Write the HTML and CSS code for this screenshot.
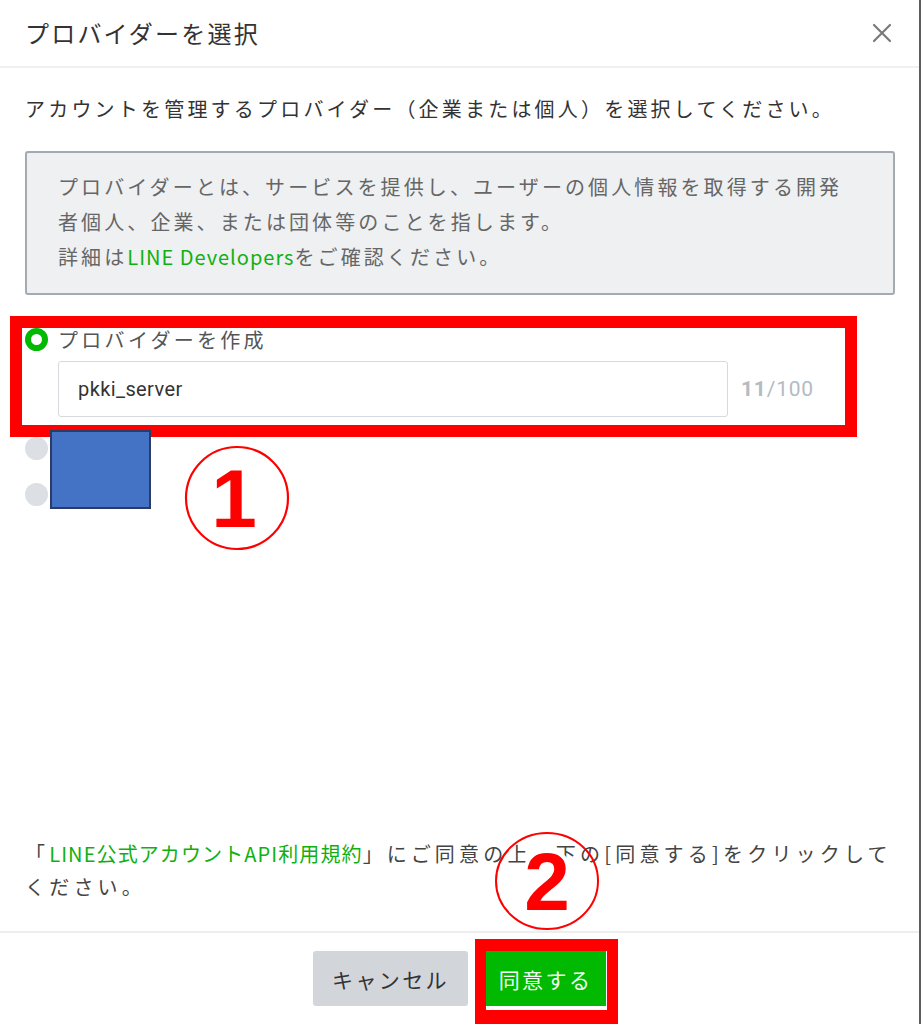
FILE: index.html
```html
<!DOCTYPE html>
<html lang="ja">
<head>
<meta charset="utf-8">
<title>プロバイダーを選択</title>
<link rel="stylesheet" href="styles.css">
</head>
<body>
<div class="modal">
  <header class="modal-header">
    <h1 class="modal-title">プロバイダーを選択</h1>
    <svg class="close" width="20" height="20" viewBox="0 0 20 20" aria-label="閉じる">
      <path d="M2 2 L18 18 M18 2 L2 18" stroke="#7a7a7a" stroke-width="2.2" fill="none" stroke-linecap="round"/>
    </svg>
  </header>

  <main class="modal-body">
    <p class="desc">アカウントを管理するプロバイダー（企業または個人）を選択してください。</p>
    <div class="info">
      プロバイダーとは、サービスを提供し、ユーザーの個人情報を取得する開発<br>者個人、企業、または団体等のことを指します。<br>詳細は<span class="link">LINE Developers</span>をご確認ください。
    </div>

    <div class="options">
      <div class="opt">
        <span class="radio radio-on"></span>
        <span class="opt-label">プロバイダーを作成</span>
      </div>
      <div class="input-row">
        <div class="text-input">pkki_server</div>
        <span class="counter"><b>11</b>/100</span>
      </div>
      <div class="opt opt-gap">
        <span class="radio"></span>
      </div>
      <div class="opt opt-gap">
        <span class="radio"></span>
      </div>
    </div>
  </main>

  <p class="terms">「<span class="link">LINE公式アカウントAPI利用規約</span>」にご同意の上、下の[同意する]をクリックして<br>ください。</p>

  <footer class="modal-footer">
    <button class="btn btn-cancel">キャンセル</button>
    <button class="btn btn-ok">同意する</button>
  </footer>

  <!-- annotations -->
  <div class="mark-box mark-box-1"></div>
  <div class="mark-blue"></div>
  <svg class="mark-num mark-num-1" width="110" height="110" viewBox="0 0 110 110">
    <circle cx="55" cy="55" r="51" fill="none" stroke="#ff0000" stroke-width="2.2"/>
    <text x="52" y="84" text-anchor="middle" class="num">1</text>
  </svg>
  <svg class="mark-num mark-num-2" width="110" height="104" viewBox="0 0 110 104">
    <ellipse cx="55" cy="52" rx="51" ry="48" fill="none" stroke="#ff0000" stroke-width="2"/>
    <text x="55" y="81" text-anchor="middle" class="num num-halo">2</text>
  </svg>
  <div class="mark-box mark-box-2"></div>
</div>
</body>
</html>
```

FILE: styles.css
```css
html, body {
  margin: 0;
  padding: 0;
  background: #ffffff;
}

.modal {
  position: relative;
  width: 921px;
  height: 1024px;
  box-sizing: border-box;
  border-right: 2px solid #5c5c5c;
  display: flex;
  flex-direction: column;
  background: #ffffff;
  font-family: "Noto Sans CJK JP", "Noto Sans", sans-serif;
  color: #333333;
  overflow: hidden;
}

.modal-header {
  height: 66px;
  flex: 0 0 auto;
  border-bottom: 2px solid #f0f0f0;
  display: flex;
  align-items: center;
  justify-content: space-between;
  padding: 0 27px 0 25px;
}

.modal-title {
  margin: 0;
  font-size: 24px;
  font-weight: 400;
  letter-spacing: 2.2px;
  color: #333333;
  line-height: 1;
}

.close {
  display: block;
}

.modal-body {
  padding: 24px 24px 0 25px;
}

.desc {
  margin: 0;
  font-size: 20px;
  line-height: 33px;
  letter-spacing: 3.2px;
  color: #333333;
  white-space: nowrap;
}

.info {
  margin-top: 26px;
  border: 2px solid #a4aab2;
  border-radius: 3px;
  background: #eef0f2;
  padding: 16px 10px 19px 31px;
  font-size: 20px;
  line-height: 35px;
  letter-spacing: 3.1px;
  color: #666666;
  white-space: nowrap;
}

.link {
  color: #10b010;
  letter-spacing: 1px;
}

.options {
  margin-top: 29px;
}

.opt {
  height: 30px;
  display: flex;
  align-items: center;
  gap: 10px;
}

.opt-gap {
  margin-top: 16px;
}

.radio {
  width: 23px;
  height: 23px;
  border-radius: 50%;
  background: #dcdfe3;
  box-sizing: border-box;
  flex: 0 0 auto;
}

.radio-on {
  background: #ffffff;
  border: 6px solid #00b900;
}

.opt-label {
  font-size: 20px;
  letter-spacing: 3.3px;
  color: #555555;
}

.input-row {
  margin-top: 7px;
  margin-left: 33px;
  display: flex;
  align-items: center;
  gap: 13px;
}

.text-input {
  width: 670px;
  height: 56px;
  box-sizing: border-box;
  border: 1px solid #d6dade;
  border-radius: 3px;
  padding-left: 19px;
  display: flex;
  align-items: center;
  font-family: Roboto, "Noto Sans", sans-serif;
  font-size: 20px;
  letter-spacing: 0.4px;
  color: #333333;
}

.counter {
  font-family: Roboto, "Noto Sans", sans-serif;
  font-size: 21px;
  color: #b3bbc3;
  letter-spacing: 0.8px;
}

.counter b {
  font-weight: 700;
}

.terms {
  margin: auto 0 28px 0;
  padding: 0 25px;
  font-size: 20px;
  line-height: 33px;
  letter-spacing: 4.2px;
  color: #444444;
  white-space: nowrap;
}

.terms .link {
  letter-spacing: 1.1px;
}

.modal-footer {
  flex: 0 0 93px;
  box-sizing: border-box;
  border-top: 2px solid #eeeeee;
  padding-top: 18px;
  display: flex;
  justify-content: center;
  align-items: flex-start;
  gap: 17px;
}

.btn {
  font: inherit;
  height: 55px;
  border: none;
  border-radius: 3px;
  font-size: 21px;
  letter-spacing: 2.4px;
  padding: 0;
  cursor: pointer;
}

.btn-cancel {
  width: 155px;
  background: #d2d6db;
  color: #333333;
}

.btn-ok {
  width: 121px;
  background: #00b900;
  color: #f0fff0;
  border-radius: 0;
}

/* annotation overlays */
.mark-box {
  position: absolute;
  box-sizing: border-box;
  border: 12px solid #ff0000;
}

.mark-box-1 {
  left: 10px;
  top: 316px;
  width: 847px;
  height: 121px;
}

.mark-box-2 {
  left: 475px;
  top: 939px;
  width: 143px;
  height: 85px;
  border-width: 12px 11px 14px 11px;
}

.mark-blue {
  position: absolute;
  left: 50px;
  top: 430px;
  width: 101px;
  height: 79px;
  box-sizing: border-box;
  background: #4472c4;
  border: 2px solid #2c3a66;
}

.mark-num {
  position: absolute;
  overflow: visible;
}

.mark-num-1 {
  left: 182px;
  top: 443px;
}

.mark-num-2 {
  left: 492px;
  top: 829px;
}

.num {
  font-family: "Liberation Sans", Arial, sans-serif;
  font-weight: 700;
  font-size: 82px;
  fill: #ff0000;
}

.num-halo {
  stroke: #ffffff;
  stroke-width: 8px;
  paint-order: stroke;
  stroke-linejoin: round;
}
```
